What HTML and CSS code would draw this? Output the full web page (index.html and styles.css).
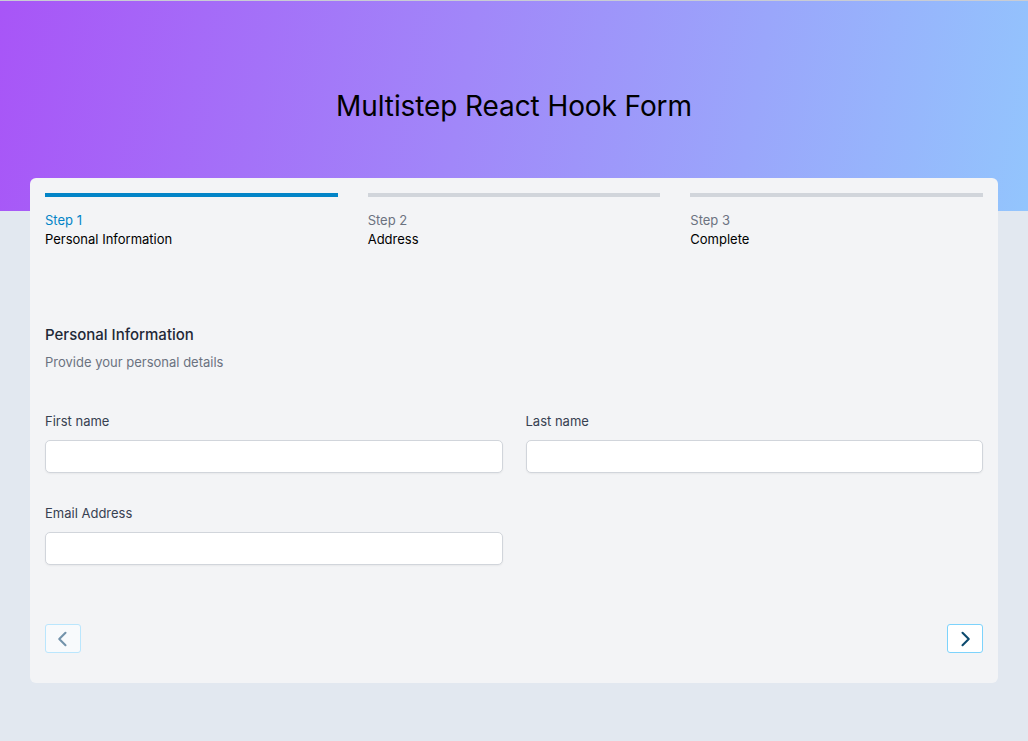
FILE: index.html
```html
<!DOCTYPE html>
<html>
<head>
<meta charset="utf-8">
<link rel="stylesheet" href="styles.css">
</head>
<body>
<header class="hero">
  <h1 class="title">Multistep React Hook Form</h1>
</header>
<main class="card">
  <ol class="steps">
    <li class="step active">
      <span class="bar"></span>
      <span class="step-num">Step 1</span>
      <span class="step-name">Personal Information</span>
    </li>
    <li class="step">
      <span class="bar"></span>
      <span class="step-num">Step 2</span>
      <span class="step-name">Address</span>
    </li>
    <li class="step">
      <span class="bar"></span>
      <span class="step-num">Step 3</span>
      <span class="step-name">Complete</span>
    </li>
  </ol>
  <section class="section">
    <h2 class="section-title">Personal Information</h2>
    <p class="section-desc">Provide your personal details</p>
    <div class="grid">
      <label class="field">
        <span class="label">First name</span>
        <input class="input" type="text">
      </label>
      <label class="field">
        <span class="label">Last name</span>
        <input class="input" type="text">
      </label>
      <label class="field">
        <span class="label">Email Address</span>
        <input class="input" type="text">
      </label>
    </div>
  </section>
  <div class="nav">
    <button class="btn prev" type="button" aria-label="Previous">
      <svg width="20" height="20" viewBox="0 0 24 24" fill="none" stroke="currentColor" stroke-width="2.5" stroke-linecap="round" stroke-linejoin="round"><path d="M15 4.5 7.5 12l7.5 7.5"/></svg>
    </button>
    <button class="btn next" type="button" aria-label="Next">
      <svg width="20" height="20" viewBox="0 0 24 24" fill="none" stroke="currentColor" stroke-width="2.5" stroke-linecap="round" stroke-linejoin="round"><path d="M9 4.5 16.5 12 9 19.5"/></svg>
    </button>
  </div>
</main>
</body>
</html>
```

FILE: styles.css
```css
* { box-sizing: border-box; }
html, body { margin: 0; padding: 0; }
body {
  background: #e2e8f0;
  font-family: Inter, "Noto Sans", sans-serif;
  color: #000;
  min-height: 741px;
  border-top: 1px solid #c9ccd4;
}
.hero {
  height: 210px;
  background: linear-gradient(100deg, #a855f7 0%, #a187f9 45%, #93c5fd 100%);
  display: flex;
  justify-content: center;
  padding-top: 88px;
}
.title {
  margin: 0;
  font-size: 28px;
  font-weight: 400;
  line-height: 34px;
  letter-spacing: -0.1px;
}
.card {
  width: 968px;
  margin: -33px auto 0;
  background: #f3f4f6;
  border-radius: 6px;
  padding: 15px 15px 30px;
}
.steps {
  list-style: none;
  margin: 0;
  padding: 0;
  display: grid;
  grid-template-columns: repeat(3, 1fr);
  column-gap: 30px;
}
.step { display: flex; flex-direction: column; }
.bar {
  height: 4px;
  background: #d1d5db;
  margin-bottom: 14px;
}
.step-num {
  font-size: 13px;
  line-height: 18px;
  color: #6b7280;
  font-weight: 400;
}
.step.active .bar { background: #0284c7; }
.step.active .step-num { color: #0284c7; }
.step-name {
  font-size: 13px;
  line-height: 20px;
  font-weight: 400;
  color: #000;
}
.section { padding-top: 75px; }
.section-title {
  margin: 0;
  font-size: 15px;
  line-height: 22px;
  font-weight: 500;
  color: #1f2937;
}
.section-desc {
  margin: 6px 0 0;
  font-size: 13px;
  line-height: 20px;
  color: #6b7280;
}
.grid {
  margin-top: 40px;
  display: grid;
  grid-template-columns: 1fr 1fr;
  column-gap: 23px;
  row-gap: 31px;
}
.field { display: flex; flex-direction: column; }
.label {
  font-size: 13px;
  line-height: 18px;
  font-weight: 400;
  color: #374151;
  margin-bottom: 10px;
}
.input {
  height: 33px;
  border: 1px solid #d1d5db;
  border-radius: 5px;
  background: #fff;
  box-shadow: 0 1px 2px rgba(0,0,0,0.05);
  font: inherit;
}
.nav {
  margin-top: 59px;
  display: flex;
  justify-content: space-between;
}
.btn {
  width: 36px;
  height: 29px;
  border-radius: 3px;
  display: flex;
  align-items: center;
  justify-content: center;
  padding: 0;
  cursor: pointer;
}
.prev {
  background: #f8fafc;
  border: 1px solid #bae6fd;
  color: #7393ab;
}
.next {
  background: #fff;
  border: 1px solid #7dd3fc;
  color: #0c4a6e;
}
```
